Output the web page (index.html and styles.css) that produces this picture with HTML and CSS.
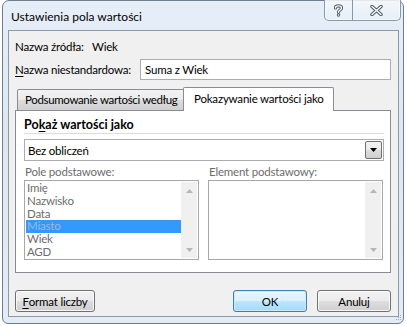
FILE: index.html
```html
<!DOCTYPE html>
<html lang="pl">
<head>
<meta charset="utf-8">
<title>Ustawienia pola wartości</title>
<link rel="stylesheet" href="styles.css">
</head>
<body>
<div class="window">
  <div class="titlebar">
    <span class="title">Ustawienia pola wartości</span>
    <div class="caption">
      <div class="cap-btn help">
        <svg width="9" height="13" viewBox="0 0 9 13"><path d="M1.5 4 C1.5 1.2 7.5 1.2 7.5 4 C7.5 6 4.5 6 4.5 8.2" fill="none" stroke="#4b5866" stroke-width="3.2" stroke-linecap="round"/><path d="M1.5 4 C1.5 1.2 7.5 1.2 7.5 4 C7.5 6 4.5 6 4.5 8.2" fill="none" stroke="#fff" stroke-width="1.4" stroke-linecap="round"/><circle cx="4.5" cy="11" r="1.7" fill="#4b5866"/><circle cx="4.5" cy="11" r="0.8" fill="#fff"/></svg>
      </div>
      <div class="cap-btn close">
        <svg width="13" height="11" viewBox="0 0 13 11"><path d="M2 1.5 L11 9.5 M11 1.5 L2 9.5" fill="none" stroke="#4b5866" stroke-width="3.4" stroke-linecap="round"/><path d="M2 1.5 L11 9.5 M11 1.5 L2 9.5" fill="none" stroke="#fff" stroke-width="1.4" stroke-linecap="round"/></svg>
      </div>
    </div>
  </div>
  <div class="client">
    <div class="row source">
      <span class="lbl">Nazwa źródła:</span>
      <span class="val">Wiek</span>
    </div>
    <div class="row custom">
      <span class="lbl"><u>N</u>azwa niestandardowa:</span>
      <div class="input">Suma z Wiek</div>
    </div>
    <div class="tabs">
      <div class="tab">Podsumowanie wartości według</div>
      <div class="tab active">Pokazywanie wartości jako</div>
    </div>
    <div class="panel">
      <div class="heading">Po<u>k</u>aż wartości jako</div>
      <div class="combo">
        <span class="combo-text">Bez obliczeń</span>
        <div class="drop">
          <svg width="7" height="4" viewBox="0 0 7 4"><path d="M0 0 H7 L3.5 4 Z" fill="#000"/></svg>
        </div>
      </div>
      <div class="lists">
        <div class="col">
          <div class="list-lbl">Pole podstawowe:</div>
          <div class="listbox">
            <ul class="items">
              <li>Imię</li>
              <li>Nazwisko</li>
              <li>Data</li>
              <li class="sel">Miasto</li>
              <li>Wiek</li>
              <li>AGD</li>
            </ul>
            <div class="sbar">
              <svg width="7" height="4" viewBox="0 0 7 4"><path d="M0 4 H7 L3.5 0 Z" fill="#b5b5b5"/></svg>
              <svg width="7" height="4" viewBox="0 0 7 4"><path d="M0 0 H7 L3.5 4 Z" fill="#b5b5b5"/></svg>
            </div>
          </div>
        </div>
        <div class="col">
          <div class="list-lbl">Element podstawowy:</div>
          <div class="listbox">
            <ul class="items"></ul>
            <div class="sbar">
              <svg width="7" height="4" viewBox="0 0 7 4"><path d="M0 4 H7 L3.5 0 Z" fill="#b5b5b5"/></svg>
              <svg width="7" height="4" viewBox="0 0 7 4"><path d="M0 0 H7 L3.5 4 Z" fill="#b5b5b5"/></svg>
            </div>
          </div>
        </div>
      </div>
    </div>
    <div class="buttons">
      <div class="btn fmt"><u>F</u>ormat liczby</div>
      <div class="spacer"></div>
      <div class="btn ok">OK</div>
      <div class="btn cancel">Anuluj</div>
    </div>
  </div>
  <div class="grip">
    <svg width="8" height="8" viewBox="0 0 8 8"><g fill="#a3adb8"><rect x="6" y="1" width="1" height="1"/><rect x="4" y="3" width="1" height="1"/><rect x="6" y="3" width="1" height="1"/><rect x="2" y="5" width="1" height="1"/><rect x="4" y="5" width="1" height="1"/><rect x="6" y="5" width="1" height="1"/></g></svg>
  </div>
</div>
</body>
</html>
```
FILE: styles.css
```css
* { box-sizing: border-box; }
html, body { margin: 0; padding: 0; background: #ffffff; }
body {
  font-family: Lato, "Noto Sans", sans-serif;
  font-size: 11.5px;
  letter-spacing: -0.2px;
  color: #000;
  white-space: nowrap;
}
u { text-decoration: underline; text-underline-offset: 2px; }

.window {
  position: relative;
  margin-left: 2px;
  width: 402px;
  height: 324px;
  border: 1px solid #6f7e8e;
  border-radius: 7px 7px 6px 6px;
  background: linear-gradient(180deg, #e6eef8 0%, #dde8f4 40%, #e3ecf6 100%);
  display: flex;
  flex-direction: column;
}

.titlebar {
  height: 29px;
  display: flex;
  align-items: flex-start;
  position: relative;
}
.title {
  margin-left: 8px;
  margin-top: 9px;
  font-size: 12px;
  letter-spacing: 0;
  line-height: 14px;
  color: #000;
}
.caption {
  margin-left: auto;
  margin-right: 2px;
  margin-top: -1px;
  display: flex;
  height: 21px;
  border: 1px solid #8997a6;
  border-top: none;
  border-radius: 0 0 5px 5px;
  background: linear-gradient(180deg, rgba(255,255,255,0.55), rgba(230,238,246,0.6));
  box-shadow: inset 0 0 0 1px rgba(255,255,255,0.6);
}
.cap-btn {
  display: flex;
  align-items: center;
  justify-content: center;
}
.cap-btn.help { width: 28px; border-right: 1px solid #8997a6; }
.cap-btn.close { width: 47px; }

.client {
  margin-left: 5px;
  width: 391px;
  height: 287px;
  border: 1px solid #8d99a6;
  background: #f0f0f0;
  padding: 0 7px 0 6px;
  display: flex;
  flex-direction: column;
}

.row { display: flex; align-items: center; }
.lbl { flex-shrink: 0; }
.source { height: 16px; margin-top: 7px; }
.source .lbl { width: 77px; }
.custom { height: 21px; margin-top: 5px; }
.custom .lbl { width: 125px; }
.input {
  flex: 1;
  height: 21px;
  border: 1px solid #abadb3;
  background: #fff;
  padding: 0 4px;
  line-height: 19px;
}

.tabs {
  margin-top: 7px;
  height: 23px;
  display: flex;
  align-items: flex-end;
  padding-left: 2px;
  position: relative;
  z-index: 1;
}
.tab {
  width: 168px;
  height: 21px;
  border: 1px solid #898c95;
  border-bottom: none;
  border-radius: 2px 2px 0 0;
  background: linear-gradient(180deg, #f2f2f2 0%, #ebebeb 50%, #dddddd 51%, #cfcfcf 100%);
  padding: 0 6px 0 7px;
  letter-spacing: -0.35px;
  line-height: 19px;
  overflow: hidden;
}
.tab.active {
  width: 151px;
  height: 24px;
  margin-bottom: -1px;
  margin-left: -2px;
  background: #ffffff;
  padding: 0 10px;
  letter-spacing: -0.2px;
  line-height: 22px;
}

.panel {
  height: 163px;
  border: 1px solid #898c95;
  background: #ffffff;
  padding: 6px 6px 0 8px;
  display: flex;
  flex-direction: column;
}
.heading {
  font-weight: bold;
  font-size: 12.5px;
  letter-spacing: 0;
  height: 17px;
  line-height: 16px;
  border-bottom: 1px solid #dcdcdc;
}
.combo {
  margin-top: 5px;
  height: 22px;
  border: 1px solid #abadb3;
  background: #fff;
  display: flex;
  align-items: center;
  padding: 1px;
}
.combo-text { flex: 1; padding-left: 2px; }
.drop {
  width: 17px;
  height: 18px;
  border: 1px solid #707070;
  border-radius: 2px;
  background: linear-gradient(180deg, #f2f2f2 0%, #ebebeb 50%, #dddddd 51%, #cfcfcf 100%);
  display: flex;
  align-items: center;
  justify-content: center;
}

.lists {
  display: flex;
  gap: 9px;
  margin-top: 2px;
}
.col { width: 175px; display: flex; flex-direction: column; }
.list-lbl { height: 17px; line-height: 17px; color: #6d6d6d; padding-left: 1px; }
.listbox {
  height: 80px;
  border: 1px solid #a7a7a7;
  background: #fff;
  display: flex;
  padding: 1px;
}
.items {
  list-style: none;
  margin: 0;
  padding: 0;
  flex: 1;
  color: #6d6d6d;
}
.items li {
  height: 12.8px;
  line-height: 12.8px;
  padding-left: 1px;
}
.items li.sel { background: #3399ff; color: #9fb7d6; }
.sbar {
  width: 16px;
  background: #f0f0f0;
  display: flex;
  flex-direction: column;
  align-items: center;
  justify-content: space-between;
  padding: 7px 0 6px;
}

.buttons {
  margin-top: 17px;
  height: 23px;
  display: flex;
  gap: 10px;
}
.spacer { flex: 1; }
.btn {
  height: 22px;
  border: 1px solid #707070;
  border-radius: 3px;
  background: linear-gradient(180deg, #f2f2f2 0%, #ebebeb 50%, #dddddd 51%, #cfcfcf 100%);
  box-shadow: inset 0 0 0 1px rgba(255,255,255,0.8);
  display: flex;
  align-items: center;
  justify-content: center;
}
.btn.fmt { width: 80px; }
.btn.ok {
  width: 74px;
  border-color: #3c7fb1;
  background: linear-gradient(180deg, #eaf6fd 0%, #d9f0fc 50%, #bee6fd 51%, #a7d9f5 100%);
  box-shadow: inset 0 0 0 1px #cdeaf9;
}
.btn.cancel { width: 74px; }

.grip {
  position: absolute;
  right: 1px;
  bottom: 1px;
  width: 8px;
  height: 8px;
  line-height: 0;
}
```
